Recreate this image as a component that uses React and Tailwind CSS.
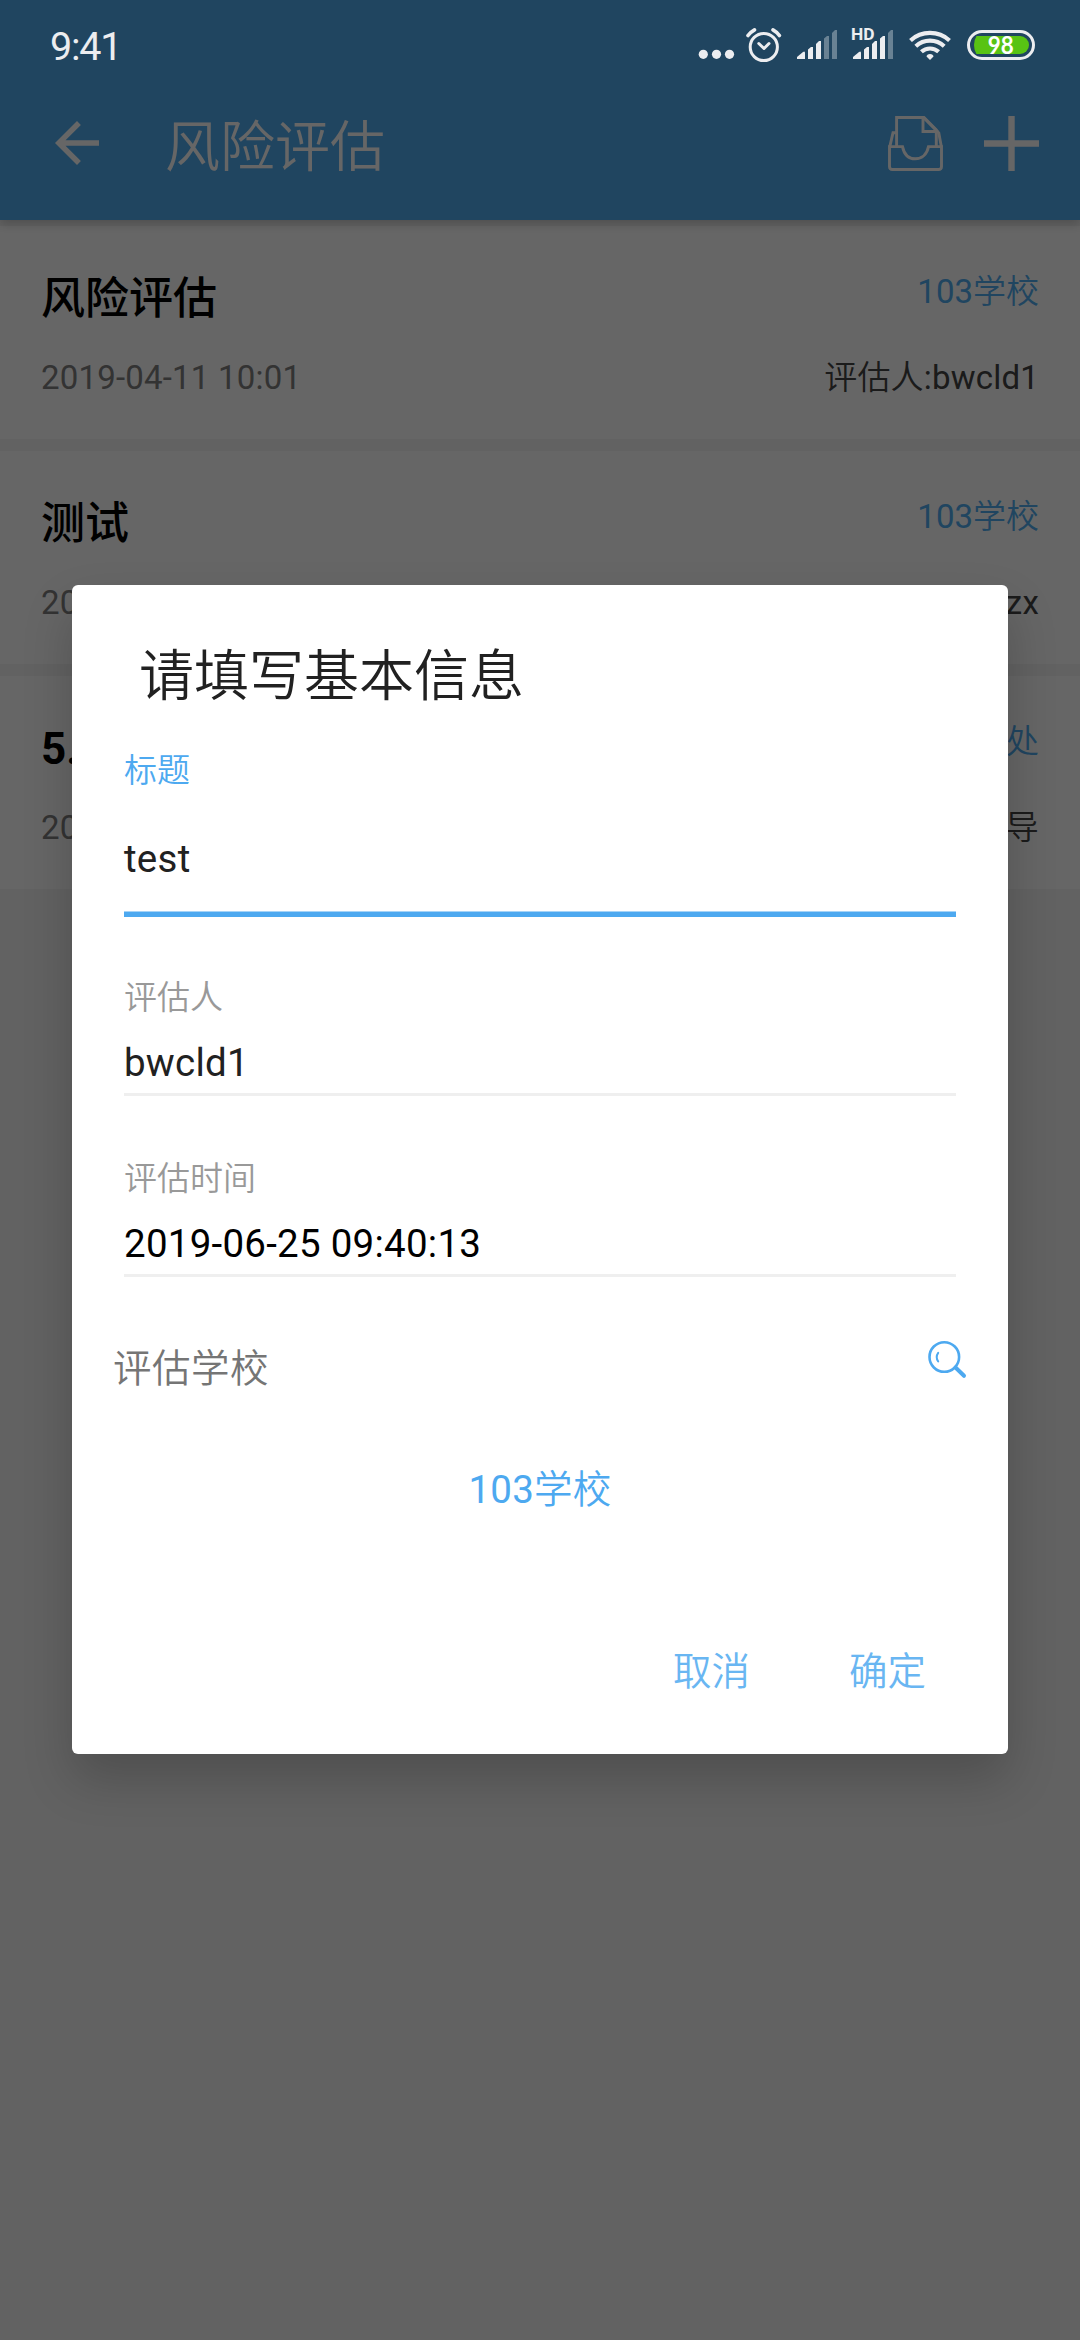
const records = [
  { title: '风险评估', titleClass: 'font-medium', place: '103学校', time: '2019-04-11 10:01', person: '评估人:bwcld1' },
  { title: '测试', titleClass: 'font-medium', place: '103学校', time: '20', person: 'zx' },
  { title: '5.', titleClass: 'font-bold', place: '处', time: '20', person: '导' },
];

// Chinese runs use a slightly lighter weight than the Latin text beside them.
function Mixed({ children }) {
  return children
    .split(/([\u4e00-\u9fff]+)/)
    .filter(Boolean)
    .map((part, i) =>
      /[\u4e00-\u9fff]/.test(part) ? (
        <span key={i} className="font-[350]">{part}</span>
      ) : (
        part
      )
    );
}

function SignalBars({ x, weak }) {
  const bars = [
    [11, 47, 49.5],
    [19, 41, 44],
    [27, 36, 38.5],
    [35, 30, 33],
  ];
  return (
    <g>
      <path d={`M${x} 59V57L${x + 6} 52Q${x + 8} 50.5 ${x + 8} 53V59Z`} />
      {bars.map(([dx, top, side], i) => (
        <path
          key={dx}
          opacity={i >= 4 - weak ? 0.36 : 1}
          d={`M${x + dx} 59V${side}L${x + dx + 3} ${top}H${x + dx + 5}V59Z`}
        />
      ))}
    </g>
  );
}

function StatusBar() {
  return (
    <div className="flex h-[66px] items-start justify-between pl-[50px] pr-[42px] text-[#ecedf0]">
      <span className="pt-[21px] text-[39.5px] leading-[52px] tracking-[-1.2px]">9:41</span>
      <div className="flex pt-5">
        <svg className="h-[50px] w-[48px]" viewBox="696 20 48 50" fill="currentColor">
          <circle cx="703.3" cy="54.3" r="4.6" />
          <circle cx="716.5" cy="54.3" r="4.6" />
          <circle cx="729.5" cy="54.3" r="4.6" />
        </svg>
        <svg className="h-[50px] w-[50px]" viewBox="744 20 50 50" fill="none" stroke="currentColor" strokeWidth="3" strokeLinecap="round" strokeLinejoin="round">
          <circle cx="763.8" cy="47" r="13.6" />
          <path d="M758.8 43.5L764 48.5L769 43.5" />
          <path d="M748 35.5Q750.5 32 754.5 29.8M779.4 35.5Q777 32 773 29.8" strokeWidth="3.6" />
        </svg>
        <svg className="h-[50px] w-[54px]" viewBox="794 20 54 50" fill="currentColor">
          <SignalBars x={797} weak={2} />
        </svg>
        <svg className="h-[50px] w-[57px]" viewBox="848 20 57 50" fill="currentColor">
          <SignalBars x={853} weak={1} />
          <text x="851" y="40.2" fontSize="16" fontWeight="700" fontFamily="Roboto, sans-serif" textLength="23.5" lengthAdjust="spacingAndGlyphs">HD</text>
        </svg>
        <svg className="h-[50px] w-[59px]" viewBox="905 20 59 50" fill="none" stroke="currentColor" strokeWidth="4.2">
          <path d="M910.5 40.5A29 29 0 0 1 949.5 40.5" />
          <path d="M915.8 46.2A21 21 0 0 1 944.2 46.2" />
          <path d="M921.4 51.8A12.8 12.8 0 0 1 938.6 51.8" />
          <path d="M930 60L926.5 56.5Q926.8 54 930 54T933.5 56.5Z" fill="currentColor" stroke="none" />
        </svg>
        <svg className="h-[50px] w-[74px]" viewBox="964 20 74 50">
          <rect x="968.5" y="31.5" width="65" height="27" rx="13.5" fill="none" stroke="currentColor" strokeWidth="3" />
          <path d="M976.5 36H1020A9 9 0 0 1 1020 54H976.5Q974 50 974 45T976.5 36Z" fill="#58c313" />
          <text x="1000.8" y="54" textAnchor="middle" fill="#fff" fontSize="24" fontWeight="700" fontFamily="Lato, sans-serif" textLength="26" lengthAdjust="spacingAndGlyphs">98</text>
        </svg>
      </div>
    </div>
  );
}

function AppBar() {
  return (
    <div className="flex h-[154px] items-center pl-11 pr-[41px] text-white">
      <svg className="size-[66px]" viewBox="0 0 24 24" fill="currentColor">
        <path d="M20 11H7.83l5.59-5.59L12 4l-8 8 8 8 1.41-1.41L7.83 13H20z" />
      </svg>
      <h1 className="flex-1 pl-[55px] pt-[7px] text-[55px] font-[350] leading-[66px]">风险评估</h1>
      <svg className="mr-[41px] size-[55px]" viewBox="0 0 55 55" fill="none" stroke="currentColor" strokeWidth="2.9">
        <path d="M1.5 30.6H14.5C16 38 20.5 42.8 27.3 42.8S39 38 40.5 30.6H53.5V50.5Q53.5 53.5 50.5 53.5H4.5Q1.5 53.5 1.5 50.5Z" />
        <path d="M8.6 30.6V1.5H36L48.3 13.8V30.6M35 1.5V15.5H50.5" />
        <path d="M1.8 30.6L5 16.8H8.6M36 2L50.8 17L53.3 30.6" />
      </svg>
      <svg className="size-[55px]" viewBox="0 0 55 55" stroke="currentColor" strokeWidth="6.4">
        <path d="M27.5 0V55M0 27.5H55" />
      </svg>
    </div>
  );
}

function RecordCard({ title, titleClass, place, time, person }) {
  return (
    <article className="h-[213px] bg-white px-[41px] pt-[43px]">
      <div className="flex h-[60px] items-start justify-between">
        <h2 className={`text-[44px] leading-[60px] text-black ${titleClass}`}>{title}</h2>
        <span className="pt-px text-[33px] leading-[44px] text-[#50acf0]"><Mixed>{place}</Mixed></span>
      </div>
      <div className="mt-[27px] flex justify-between text-[33px] leading-[44px] tracking-[0.2px]">
        <time className="text-[#808080]">{time}</time>
        <span className="text-[#444]"><Mixed>{person}</Mixed></span>
      </div>
    </article>
  );
}

function Field({ label, value, valueClass }) {
  return (
    <div className="mx-[52px] border-b-[3px] border-[#efefef]">
      <div className="pt-px text-[33px] font-[350] leading-[44px] text-[#999]">{label}</div>
      <div className={`mt-[18px] h-[55px] text-[38.5px] leading-[50px] tracking-[0.25px] ${valueClass}`}>{value}</div>
    </div>
  );
}

function Dialog() {
  return (
    <section className="h-[1169px] w-[936px] rounded-[6px] bg-white pt-[58px] shadow-[0_25px_50px_rgba(0,0,0,0.2)]">
      <h2 className="pl-[67px] text-[55px] font-[350] leading-[66px] text-[#212121]">请填写基本信息</h2>

      <div className="mx-[52px] mt-10">
        <div className="text-[33px] font-[350] leading-[44px] text-[#4da9f0]">标题</div>
        <div className="mt-[41px] text-[38.5px] leading-[50px] tracking-[0.25px] text-[#212121]">test</div>
        <div className="mt-[27px] h-[6px] border-t border-[#a5d3f7] bg-[#4da9f0]" />
      </div>

      <div className="mt-[58px]">
        <Field label="评估人" value="bwcld1" valueClass="text-[#212121]" />
      </div>
      <div className="mt-[60px]">
        <Field label="评估时间" value="2019-06-25 09:40:13" valueClass="text-black" />
      </div>

      <div className="mt-[67px] flex items-start justify-between pl-[41px] pr-[40px]">
        <span className="text-[38.5px] font-[350] leading-[50px] tracking-[0.5px] text-[#757575]">评估学校</span>
        <svg className="-mt-[5px] h-[42px] w-[42px]" viewBox="926 1339 42 42" fill="none" stroke="#4da9f0" strokeLinecap="round">
          <circle cx="944.3" cy="1357" r="14.8" strokeWidth="2.6" />
          <path d="M938.2 1352.8Q935.2 1357 938.2 1361.5" strokeWidth="2" />
          <path d="M955.5 1367.5L964 1375.8" strokeWidth="4" />
        </svg>
      </div>

      <div className="mt-[71px] text-center text-[38.5px] leading-[50px] tracking-[0.25px] text-[#4da9f0]"><Mixed>103学校</Mixed></div>

      <div className="mt-[132px] flex justify-end gap-[99px] pr-[82px] text-[38.5px] font-[350] leading-[50px] text-[#69b6f2]">
        <button>取消</button>
        <button>确定</button>
      </div>
    </section>
  );
}

export default function App() {
  return (
    <div className="relative h-[2340px] w-[1080px] overflow-hidden bg-[#f5f5f5] font-['Roboto','Noto_Sans_CJK_SC',sans-serif] [font-kerning:none]">
      <header className="relative bg-[#50acf0] pt-[66px] shadow-[0_4px_10px_rgba(0,0,0,0.2)]">
        <AppBar />
      </header>
      <main className="flex flex-col gap-3 pt-[6px]">
        {records.map((record) => (
          <RecordCard key={record.title} {...record} />
        ))}
      </main>
      <div className="absolute inset-0 flex items-start justify-center bg-black/60 pt-[585px]">
        <Dialog />
      </div>
      <div className="absolute inset-x-0 top-0">
        <StatusBar />
      </div>
    </div>
  );
}
